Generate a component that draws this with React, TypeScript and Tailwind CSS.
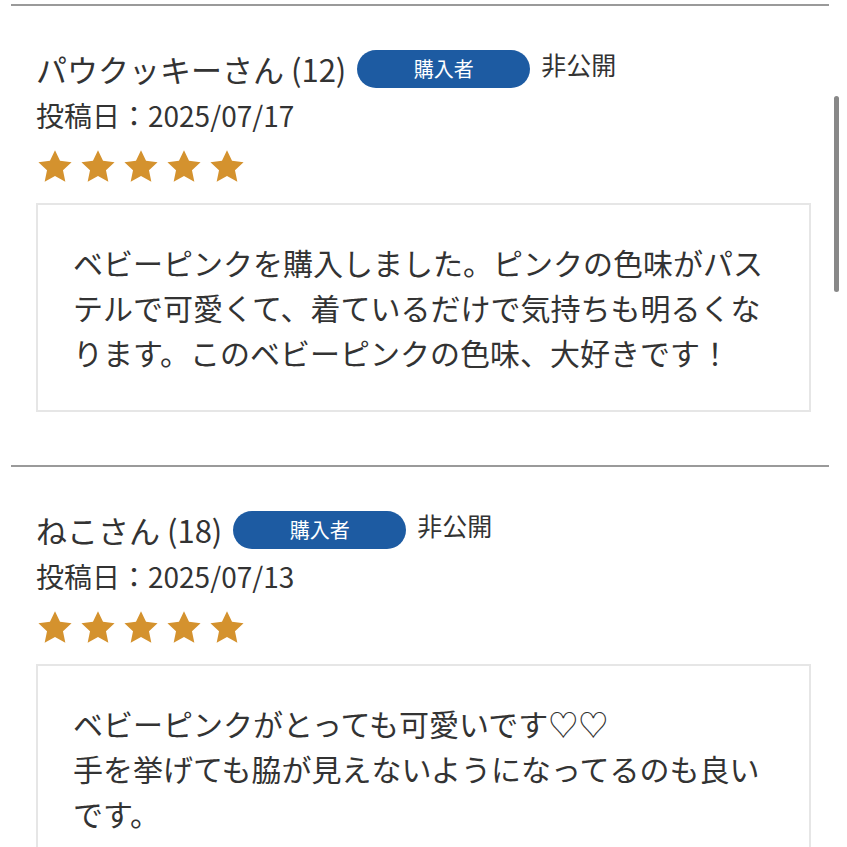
const reviews = [
  {
    name: "パウクッキーさん (12)",
    date: "投稿日：2025/07/17",
    body: "ベビーピンクを購入しました。ピンクの色味がパステルで可愛くて、着ているだけで気持ちも明るくなります。このベビーピンクの色味、大好きです！",
  },
  {
    name: "ねこさん (18)",
    date: "投稿日：2025/07/13",
    body: "ベビーピンクがとっても可愛いです♡♡\n手を挙げても脇が見えないようになってるのも良いです。",
  },
];

const Star = () => (
  <svg width="36" height="34" viewBox="0 0 24 23" className="shrink-0">
    <path
      d="M12 0.8l3.4 7.2 7.8 0.9-5.8 5.4 1.6 7.8L12 18.2l-7 3.9 1.6-7.8L0.8 8.9l7.8-0.9z"
      fill="#d4922e"
    />
  </svg>
);

const ReviewItem = ({ name, date, body }: { name: string; date: string; body: string }) => {
  return (
    <div className="border-t-2 border-[#9a9a9a] pt-[44px] pb-[53px] pl-[25px] pr-[18px]">
      <div className="flex items-start h-[38px]">
        <span className="text-[31px] leading-[38px] text-[#333]">{name}</span>
        <span className="ml-[11px] w-[173px] h-[38px] rounded-full bg-[#1d5ba2] text-white text-[20px] flex items-center justify-center">
          購入者
        </span>
        <span className="ml-[11px] text-[25px] leading-[28px] text-[#333]">非公開</span>
      </div>
      <div className="mt-[9px] text-[28px] leading-[36px] text-[#333]">{date}</div>
      <div className="mt-[16px] flex gap-[7px] pl-[1px]">
        <Star />
        <Star />
        <Star />
        <Star />
        <Star />
      </div>
      <div className="mt-[20px] border-2 border-[#e6e6e6] px-[35px] py-[35px] text-[30px] leading-[45px] text-[#333] whitespace-pre-line">
        {body}
      </div>
    </div>
  );
};

export default function App() {
  return (
    <div
      className="relative w-[847px] h-[847px] overflow-hidden bg-white"
      style={{ fontFamily: '"Noto Sans CJK JP", "Noto Sans", sans-serif' }}
    >
      <div className="pt-[4px] pl-[11px] pr-[18px]">
        {reviews.map((r) => (
          <ReviewItem key={r.date} {...r} />
        ))}
      </div>
      <div className="absolute left-[834px] top-[96px] w-[5px] h-[196px] rounded-full bg-[#888]" />
    </div>
  );
}
